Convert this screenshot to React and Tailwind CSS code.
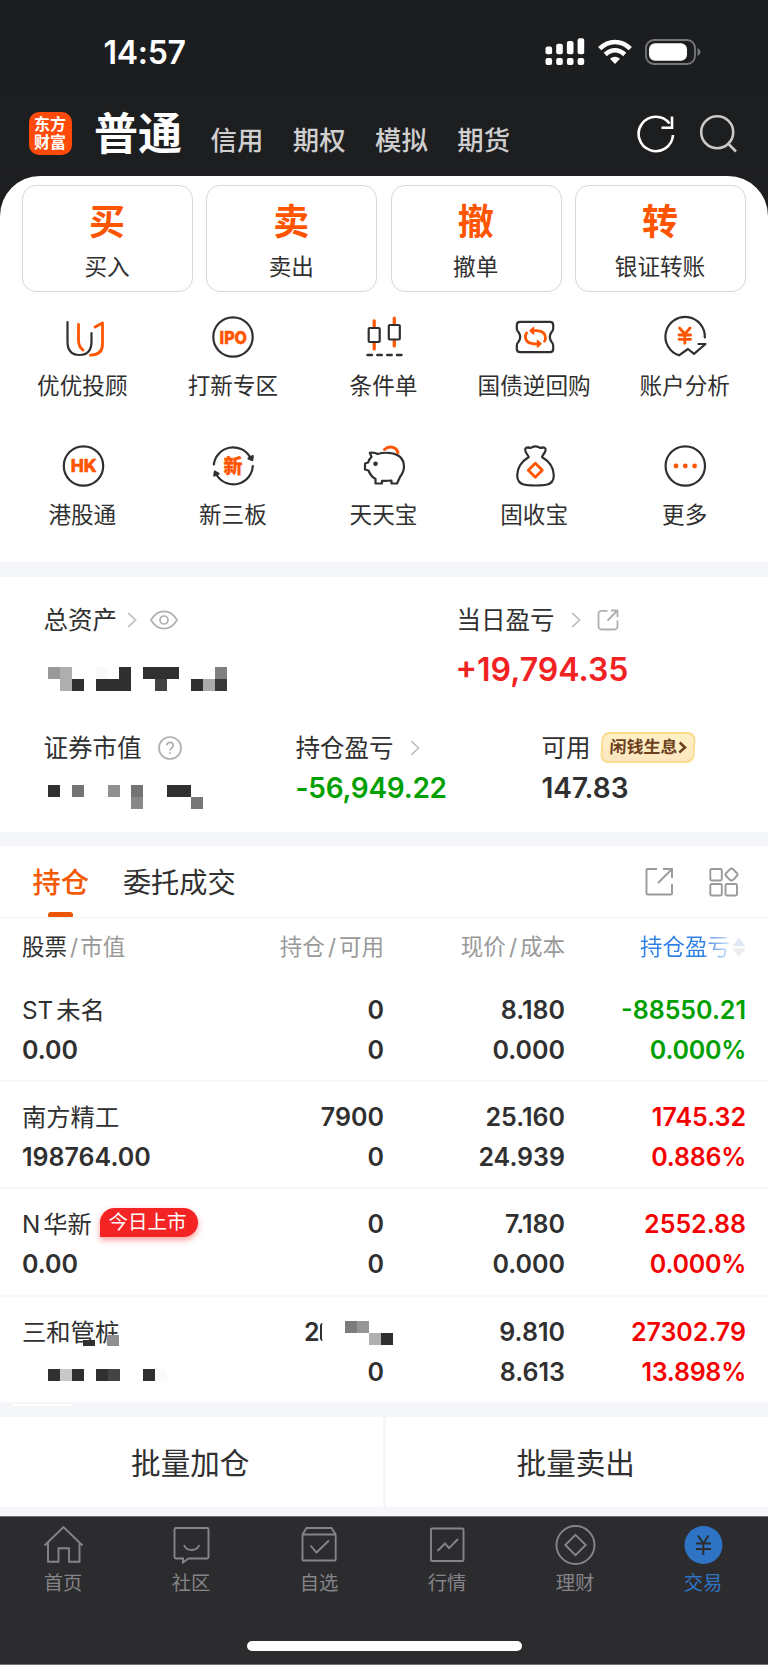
import React from "react";

const DARK = "#303030";
const ORANGE = "#ff5500";

function Chevron({ className = "" }) {
  return (
    <svg width="10" height="16" viewBox="0 0 10 16" fill="none" stroke="#bdbdbd" strokeWidth="1.6" className={className}>
      <path d="M1.2 1.2 8.6 8l-7.4 6.8" />
    </svg>
  );
}

function Mosaic({ cells, width, height, className = "" }) {
  return (
    <svg width={width} height={height} className={className} shapeRendering="crispEdges">
      {cells.map(([col, row, color]) => (
        <rect key={`${col}-${row}`} x={col * 11.9} y={row * 11.9} width="12" height="12" fill={color} />
      ))}
    </svg>
  );
}

function IconBox({ children }) {
  return (
    <svg width="42" height="42" viewBox="0 0 42 42" fill="none" stroke={DARK} strokeWidth="2.2" strokeLinecap="round" strokeLinejoin="round" className="ml-px block overflow-visible">
      {children}
    </svg>
  );
}

const labelInIcon = { fill: ORANGE, stroke: ORANGE, strokeWidth: 0.5, fontWeight: 800, textAnchor: "middle", fontFamily: 'Inter, "Noto Sans CJK SC", sans-serif' };

const icons = {
  advisor: (
    <IconBox>
      <path d="M5.500 6v19.500q0 13.500 12 13.500t12-13.500v-8.500" />
      <path d="M16.500 8.500v15q0 7.500 4.500 10.500M33 11l7.500-4v21q0 11-12 11.200" stroke={ORANGE} strokeWidth="2.800" />
    </IconBox>
  ),
  ipo: (
    <IconBox>
      <circle cx="21" cy="21" r="19.700" />
      <text x="21.300" y="27.500" fontSize="18" textLength="27.500" lengthAdjust="spacingAndGlyphs" {...labelInIcon}>IPO</text>
    </IconBox>
  ),
  candles: (
    <IconBox>
      <path d="M11.200 4.800v6.500M11.200 27v6M31.300 2.200v6.500M31.300 24v6" stroke={ORANGE} strokeWidth="3.200" />
      <rect x="5.700" y="12" width="11" height="14" rx="1" />
      <rect x="25.800" y="9" width="11" height="14.500" rx="1" />
      <path d="M4.500 39h4.500M14.300 39h4.500M24.200 39h4.500M34 39h4.500" strokeWidth="2.400" />
    </IconBox>
  ),
  bond: (
    <IconBox>
      <path d="M6 5.800H36q3.200 0 3.200 3.200v3.500q0 2-1.600 3.500-3.600 5 0 10 1.600 1.500 1.600 3.500V33q0 3.200-3.200 3.200H6q-3.200 0-3.200-3.200v-3.500q0-2 1.600-3.500 3.600-5 0-10-1.600-1.500-1.600-3.500V9q0-3.200 3.200-3.200z" />
      <path d="M18 14.700h4.500q9 .5 9 7.300 0 1.800-1 3.200M12.600 17q-1.200 1.800-1.200 4 0 6.300 9 6.800h4" stroke={ORANGE} strokeWidth="2.800" />
      <path d="M19.500 11.500 16 14.700l3.500 3.200zM23.500 24.600l3.500 3.200-3.500 3.200z" stroke={ORANGE} fill={ORANGE} strokeWidth="1.500" />
    </IconBox>
  ),
  analysis: (
    <IconBox>
      <path d="M40.800 21.500A19.700 19.700 0 1 0 15 39.300L24 33l6 4.900L41.500 28h-7" />
      <path d="M15.500 12l5.300 6 5.300-6M20.800 18v9.300M15 19h11.600M15 23.300h11.600" stroke={ORANGE} strokeWidth="2.800" />
    </IconBox>
  ),
  hk: (
    <IconBox>
      <circle cx="21.500" cy="21" r="19.700" />
      <text x="21.700" y="27.300" fontSize="18" textLength="26" lengthAdjust="spacingAndGlyphs" {...labelInIcon}>HK</text>
    </IconBox>
  ),
  board: (
    <IconBox>
      <path d="M1.800 19.500A19.500 19.500 0 0 1 38 12M40.800 21A19.500 19.500 0 0 1 5 30.500" />
      <path d="M36.500 13.500l3.700 1.500.6-4zM2.300 30.500l.6-3.800 3.600 2z" fill={DARK} />
      <text x="21" y="27.500" fontSize="19" {...labelInIcon} strokeWidth="0.3">新</text>
    </IconBox>
  ),
  pig: (
    <IconBox>
      <path d="M6.800 7.800Q11.500 7 14.500 9 19 7.600 25 7.800q15.800.8 16 14 0 5-4 10.200l-3 6.500h-5.500V35.500q-5 .6-9.500.4v2.600h-6.500V34Q7.500 31 5.500 25.500L2 24.500v-6l3.200-1Q6 14 8.500 11.800z" />
      <circle cx="12.500" cy="18.700" r="1.200" fill={DARK} />
      <path d="M21.500 4.500q3-2.800 6.500-2.500 5.500.5 7 5.500" stroke={ORANGE} strokeWidth="3" />
    </IconBox>
  ),
  bag: (
    <IconBox>
      <path d="M14.800 12Q13 9 11.700 7 10 2.500 14 2.400q2.700 1 4-.2 3.400-1.800 6.800 0 1.400 1.200 4 .2Q33 2.500 31 7q-1.500 2-3 5Q39.500 19 39.800 30q.3 9-8.800 10-9.700 1-19 0Q3 39 3.200 30 3.500 19 14.800 12z" />
      <path d="M21.300 18.300l7 7-7 7-7-7z" stroke={ORANGE} strokeWidth="2.800" />
    </IconBox>
  ),
  more: (
    <IconBox>
      <circle cx="21.300" cy="21" r="19.700" />
      <g fill={ORANGE} stroke="none">
        <circle cx="12" cy="21" r="2.400" />
        <circle cx="21.300" cy="21" r="2.400" />
        <circle cx="30.600" cy="21" r="2.400" />
      </g>
    </IconBox>
  ),
};

const actions = [
  ["买", "买入"],
  ["卖", "卖出"],
  ["撤", "撤单"],
  ["转", "银证转账"],
];

const services = [
  ["advisor", "优优投顾"],
  ["ipo", "打新专区"],
  ["candles", "条件单"],
  ["bond", "国债逆回购"],
  ["analysis", "账户分析"],
  ["hk", "港股通"],
  ["board", "新三板"],
  ["pig", "天天宝"],
  ["bag", "固收宝"],
  ["more", "更多"],
];

const D = "#303030";
const totalCells = [
  [0, 0, "#999999"], [1, 0, "#aeaeae"], [4, 0, "#f9f9f9"], [6, 0, D], [8, 0, D], [9, 0, D], [10, 0, D], [14, 0, "#808080"],
  [1, 1, "#aeaeae"], [2, 1, D], [4, 1, D], [5, 1, D], [6, 1, D], [9, 1, "#444444"], [12, 1, D], [13, 1, "#aaaaaa"], [14, 1, "#383838"],
];
const marketCells = [
  [0, 0, D], [2, 0, "#747474"], [5, 0, "#909090"], [7, 0, "#747474"], [10, 0, D], [11, 0, D],
  [7, 1, "#888888"], [12, 1, "#777777"],
];
const valueCells = [[0, 0, D], [1, 0, "#c8c8c8"], [2, 0, D], [4, 0, D], [5, 0, "#444444"], [8, 0, D], [9, 0, "#fafafa"]];
const amountCells = [[0, 0, "#7c7c7c"], [1, 0, "#969696"], [2, 1, "#b0b0b0"], [3, 1, D]];

const holdings = [
  { prefix: "ST", name: "未名", value: "0.00", qty: "0", avail: "0", price: "8.180", cost: "0.000", pl: "-88550.21", pct: "0.000%", color: "text-[#00a000]" },
  { name: "南方精工", value: "198764.00", qty: "7900", avail: "0", price: "25.160", cost: "24.939", pl: "1745.32", pct: "0.886%", color: "text-[#f50000]" },
  { prefix: "N", name: "华新", tag: "今日上市", value: "0.00", qty: "0", avail: "0", price: "7.180", cost: "0.000", pl: "2552.88", pct: "0.000%", color: "text-[#f50000]" },
  { name: "三和管桩", masked: true, avail: "0", price: "9.810", cost: "8.613", pl: "27302.79", pct: "13.898%", color: "text-[#f50000]" },
];

function StatusBar() {
  return (
    <div className="flex h-[104px] items-center justify-between pl-[103.500px] pr-[67px]">
      <div className="pt-[2px] text-[32px] font-semibold leading-none tracking-[-0.3px] text-white">14:57</div>
      <div className="flex items-center gap-[13px]">
        <svg width="40" height="28" viewBox="0 0 40 28" fill="#fff">
          {[8.5, 5.7, 3, 0.3].map((y, i) => (
            <g key={y}>
              <rect x={0.5 + i * 10.7} y={y} width="6.600" height={16.3 - y} rx="2" />
              <rect x={0.5 + i * 10.7} y="20" width="6.600" height="7" rx="2" />
            </g>
          ))}
        </svg>
        <svg width="34" height="26" viewBox="0 0 34 26" fill="none" stroke="#fff" strokeWidth="4.600">
          <path d="M1.700 9.700Q8.500 3 17 3t15.300 6.700M7.300 15.500Q11.700 11.300 17 11.300t9.700 4.200" />
          <path d="M17 25l-5-5.200q5-4.200 10 0z" fill="#fff" stroke="none" />
        </svg>
        <svg width="56" height="26" viewBox="0 0 56 26" fill="none">
          <rect x="1" y="1" width="49" height="24" rx="8" stroke="#77787a" strokeWidth="1.800" />
          <rect x="4" y="4.200" width="38" height="17.600" rx="6" fill="#fff" />
          <path d="M52.500 9q3 1.500 3 4t-3 4z" fill="#77787a" />
        </svg>
      </div>
    </div>
  );
}

function Header() {
  return (
    <div className="flex h-[72px] items-start pl-[28.500px]">
      <div className="mt-2 flex h-[43px] w-[43px] flex-col items-center justify-center rounded-[10px] bg-[#ff4a0a] text-[16px] font-bold leading-[17.500px] text-white">
        <span>东方</span>
        <span>财富</span>
      </div>
      <div className="ml-[22.500px] h-[60px] text-[44px] font-semibold leading-[60px] text-white">普通</div>
      <div className="ml-[28.500px] mt-[16px] flex gap-[29.500px] text-[26.400px] font-medium leading-[41px] text-[#cfcfcf]">
        <span>信用</span>
        <span>期权</span>
        <span>模拟</span>
        <span>期货</span>
      </div>
      <svg width="38" height="40" viewBox="0 0 38 40" fill="none" stroke="#fff" strokeWidth="2.600" className="ml-auto mt-[10px]">
        <path d="M36 21A17.200 17.200 0 1 1 32.500 9.500" />
        <path d="M35 2.500v11.300H24.500" />
      </svg>
      <svg width="40" height="40" viewBox="0 0 40 40" fill="none" stroke="#c8c8c8" strokeWidth="2.600" className="ml-[24px] mr-[29px] mt-[10px]">
        <circle cx="18.200" cy="18.200" r="16" />
        <path d="M29 29.500l8 8" />
      </svg>
    </div>
  );
}

function Assets() {
  return (
    <section className="h-[255px] bg-white pt-[27px] text-[24.500px] text-[#303030]">
      <div className="flex">
        <div className="ml-[43.500px] w-[413px] shrink-0">
          <div className="flex h-8 items-center leading-8">
            总资产
            <Chevron className="ml-[10px]" />
            <svg width="28" height="20" viewBox="0 0 28 20" fill="none" stroke="#b0b0b0" strokeWidth="1.700" className="ml-[13px]">
              <path d="M1 10Q6 1.300 14 1.300T27 10q-5 8.700-13 8.700T1 10z" />
              <circle cx="14" cy="10" r="4" />
            </svg>
          </div>
          <Mosaic cells={totalCells} width={182} height={24} className="ml-[4px] mt-[31px] block" />
        </div>
        <div>
          <div className="flex h-8 items-center leading-8">
            当日盈亏
            <Chevron className="ml-[16px]" />
            <svg width="22" height="22" viewBox="0 0 22 22" fill="none" stroke="#b0b0b0" strokeWidth="1.800" className="ml-[16px]">
              <path d="M10.500 1.800H5Q1.500 1.800 1.500 5v12q0 3.500 3.500 3.500h12q3.500 0 3.500-3.500v-5.500M14 1.500h6.500V8M20 2L10.500 11.500" />
            </svg>
          </div>
          <div className="-ml-px mt-[18px] h-8 text-[32px] font-semibold leading-8 text-[#f32222]">+19,794.35</div>
        </div>
      </div>
      <div className="mt-[41px] flex pl-[43.500px]">
        <div className="w-[252px]">
          <div className="flex h-8 items-center leading-8">
            证券市值
            <svg width="24" height="24" viewBox="0 0 24 24" fill="none" stroke="#b0b0b0" strokeWidth="1.700" className="ml-[16px]">
              <circle cx="12" cy="12" r="11" />
              <path d="M8.800 9.300Q9 6.300 12 6.300t3.200 3q0 1.600-1.800 2.800-1.400 1-1.400 2.700M12 16.200v1.900" />
            </svg>
          </div>
          <Mosaic cells={marketCells} width={156} height={24} className="ml-[4px] mt-[21px] block" />
        </div>
        <div className="w-[246px]">
          <div className="flex h-8 items-center leading-8">
            持仓盈亏
            <Chevron className="ml-[16px]" />
          </div>
          <div className="mt-2 text-[28px] font-semibold leading-8 tracking-[-0.250px] text-[#00a000]">-56,949.22</div>
        </div>
        <div>
          <div className="flex h-8 items-center leading-8">
            可用
            <span className="-mt-px ml-[10px] flex h-[31px] w-[94px] -skew-x-3 items-center justify-center rounded-[8px] border-2 border-[#fbdc8c] bg-gradient-to-b from-[#fff0c4] to-[#fde6bf] text-[17px] font-bold leading-none text-[#6b3f20]">
              闲钱生息
              <svg width="9" height="13" viewBox="0 0 9 13" fill="none" stroke="#6b3f20" strokeWidth="2.500">
                <path d="M1.500 1.500l5.500 5-5.500 5" />
              </svg>
            </span>
          </div>
          <div className="mt-2 text-[28px] font-semibold leading-8">147.83</div>
        </div>
      </div>
    </section>
  );
}

function HoldingsTabs() {
  return (
    <div className="flex h-[72px] items-start border-b border-[#f1f1f3] bg-white pl-[32.500px] pr-[29px]">
      <div className="flex flex-col items-center text-[28.200px] font-medium text-[#f45a05]">
        <span className="h-[66px] leading-[74px]">持仓</span>
        <span className="h-[5px] w-[25px] rounded-t-[3px] rounded-b-[1px] bg-[#ec5504]" />
      </div>
      <span className="ml-[34px] text-[28.200px] leading-[74px] text-[#303030]">委托成交</span>
      <svg width="29" height="30" viewBox="0 0 29 30" fill="none" stroke="#9a9a9a" strokeWidth="1.900" className="ml-auto mt-[21px]">
        <path d="M12 2H2.500Q1.500 2 1.500 3v23.500q0 1 1 1h23.500q1 0 1-1V17M18 2h9v9M26.500 2.500L13 16" />
      </svg>
      <svg width="30" height="30" viewBox="0 0 30 30" fill="none" stroke="#9a9a9a" strokeWidth="1.900" strokeLinejoin="round" className="ml-[35px] mt-[21px]">
        <rect x="1.300" y="2" width="11.500" height="11.500" rx="1.500" />
        <rect x="1.300" y="17" width="11.500" height="11.500" rx="1.500" />
        <rect x="16.500" y="17" width="11.500" height="11.500" rx="1.500" />
        <path d="M22.500 1.500q1 0 1.700.8l4 4.200q.8 1 0 2l-4 4.300q-1.700 1.600-3.400 0l-4-4.300q-.8-1 0-2l4-4.200q.7-.8 1.700-.8z" />
      </svg>
    </div>
  );
}

function HoldingRow({ row }) {
  return (
    <div className="flex h-[107.200px] border-b-2 border-[#f7f7f8] px-[22px] pt-[15px] text-[25px] font-semibold leading-[40px] text-[#303030]">
      <div className="w-[192px]">
        <div className="relative flex h-[40px] items-center text-[24.300px] font-normal">
          {row.prefix && <span className="mr-[3px]">{row.prefix}</span>}
          {row.name}
          {row.tag && (
            <span className="mb-[4px] ml-[8px] flex h-[29px] w-[98px] items-center justify-center rounded-full rounded-bl-[3px] bg-[#f52424] pr-[3px] text-[19.500px] leading-none text-white shadow-[0_3px_6px_rgba(245,36,36,0.45)]">
              {row.tag}
            </span>
          )}
          {row.masked && (
            <span className="absolute left-[61px] top-[23px] flex h-[11px] items-end gap-3">
              <span className="h-[6px] w-3 bg-[#303030]" />
              <span className="h-[11px] w-3 bg-[#909090]" />
            </span>
          )}
        </div>
        {row.masked ? <Mosaic cells={valueCells} width={120} height={12} className="ml-[26px] mt-[17px] block" /> : row.value}
      </div>
      <div className="w-[170px] text-right">
        {row.masked ? (
          <div className="flex h-[40px] items-center">
            <span className="ml-[90px] shrink-0">2</span>
            <span className="h-[18px] w-[3px] shrink-0 rounded-l-full border-l-2 border-[#303030]" />
            <Mosaic cells={amountCells} width={48} height={24} className="-mr-4 ml-[22px] mt-[2px] shrink-0" />
          </div>
        ) : (
          <div>{row.qty}</div>
        )}
        <div>{row.avail}</div>
      </div>
      <div className="w-[181px] text-right">
        <div>{row.price}</div>
        <div>{row.cost}</div>
      </div>
      <div className={`w-[181px] text-right ${row.color}`}>
        <div>{row.pl}</div>
        <div className="tracking-[-0.250px]">{row.pct}</div>
      </div>
    </div>
  );
}

const tabItems = [
  ["首页", <path key="i" d="M1.500 20.500L20.500 2l19 18.500M5 17.500v19.300h10.500V23.200h10.500v13.600h10.500V17.500" />],
  ["社区", (
    <g key="i">
      <path d="M5 3h31q1.500 0 1.500 1.500v27.500q0 1.500-1.500 1.500H17.500L12 37.500v-4H5q-1.500 0-1.500-1.500V4.500Q3.500 3 5 3z" />
      <path d="M13 20q2 5 7.700 5t7.600-5" />
    </g>
  )],
  ["自选", (
    <g key="i">
      <path d="M3.500 9.500L7.500 3h25l4.200 6.500M4.500 9.500h31.200q1 0 1 1v24q0 1-1 1H4.500q-1 0-1-1v-24q0-1 1-1zM11.500 20.500l6 7L30 15.500" />
    </g>
  )],
  ["行情", (
    <g key="i">
      <rect x="4" y="3.500" width="32.500" height="32.500" rx="1" />
      <path d="M10.500 26l7.500-7.500 4 4.700L31 14" />
    </g>
  )],
  ["理财", (
    <g key="i">
      <circle cx="20.500" cy="20" r="19" />
      <path d="M20.500 9.800L30.700 20 20.500 30.200 10.300 20z" />
    </g>
  )],
  ["交易", (
    <g key="i">
      <circle cx="20.500" cy="20" r="19" fill="#2f74c4" stroke="none" />
      <path d="M15 10.500l5.300 8 5.300-8M20.300 18.500V30M13 18.500h15M13 24h15" stroke="#2c2c2e" strokeWidth="2" />
    </g>
  ), true],
];

function TabBar() {
  return (
    <nav className="flex h-[149px] flex-col border-b border-t border-[#6f6f72] bg-[#2c2c2e]">
      <div className="-ml-px flex pt-[8px]">
        {tabItems.map(([label, icon, active]) => (
          <div key={label} className="flex w-32 flex-col items-center">
            <svg width="41" height="40" viewBox="0 0 41 40" fill="none" stroke="#858489" strokeWidth="1.900" className="ml-px">
              {icon}
            </svg>
            <span className={active ? "mt-[4px] text-[19.300px] leading-7 text-[#2f74c4]" : "mt-[4px] text-[19.300px] leading-7 text-[#858489]"}>{label}</span>
          </div>
        ))}
      </div>
      <div className="mb-[13px] mt-auto h-[10px] w-[275px] self-center rounded-full bg-white" />
    </nav>
  );
}

export default function App() {
  return (
    <div className="h-[1665px] w-[768px] overflow-hidden bg-[#f5f6f9] font-['Inter','Noto_Sans_CJK_SC',sans-serif]">
      <div className="bg-gradient-to-b from-[#1c1d1f] from-0% via-[#1d1e20] via-30% to-[#232323]">
        <StatusBar />
        <Header />
        <section className="h-[386px] rounded-t-[40px] bg-white pt-[9px] text-[22.600px] text-[#303030]">
          <div className="grid grid-cols-4 gap-[13.300px] px-[22px]">
            {actions.map(([glyph, label]) => (
              <div key={label} className="flex h-[107px] flex-col items-center rounded-[14px] border border-[#d8d8d8] pr-px pt-[15px]">
                <span className="text-[36px] font-bold leading-[43px] text-[#ff5500]">{glyph}</span>
                <span className="mt-[7px] leading-[32px]">{label}</span>
              </div>
            ))}
          </div>
          <div className="grid grid-cols-5 pl-[7px] pr-[8px]">
            {services.map(([icon, label]) => (
              <div key={label} className="flex h-[129px] flex-col items-center pt-6">
                {icons[icon]}
                <span className="mt-[14px] whitespace-nowrap leading-[28.500px]">{label}</span>
              </div>
            ))}
          </div>
        </section>
      </div>
      <div className="h-[15px]" />
      <Assets />
      <div className="h-[14px]" />
      <HoldingsTabs />
      <div className="bg-white">
        <div className="flex h-[57px] items-center px-[22px] text-[22.500px] text-[#999999]">
          <span className="w-[192px]">
            <span className="text-[#303030]">股票</span>
            <span className="pl-[3px] pr-[2px]">/</span>市值
          </span>
          <span className="w-[170px] text-right">持仓<span className="px-[3px]">/</span>可用</span>
          <span className="w-[181px] text-right">现价<span className="px-[3px]">/</span>成本</span>
          <span className="flex w-[181px] items-center justify-end">
            <span className="bg-gradient-to-r from-[#2f80e4] from-70% to-[#d6e5fa] bg-clip-text text-transparent">持仓盈亏</span>
            <svg width="14" height="20" viewBox="0 0 14 20" className="ml-[2px]">
              <path d="M7 0.500L13.500 9H0.500z" fill="#dfe8f5" />
              <path d="M7 19.500L13.500 11.500H0.500z" fill="#ebebed" />
            </svg>
          </span>
        </div>
        {holdings.map((row) => (
          <HoldingRow key={row.name} row={row} />
        ))}
      </div>
      <div className="h-[13px]">
        <div className="ml-[12px] h-[2px] w-[60px] rounded-b-full bg-white" />
      </div>
      <div className="flex h-[90px] gap-[3px] text-[29.600px] leading-[92px] text-[#303030]">
        <div className="flex-1 bg-white pr-[2px] text-center">批量加仓</div>
        <div className="flex-1 bg-white pr-[2px] text-center">批量卖出</div>
      </div>
      <div className="h-[9px]" />
      <TabBar />
    </div>
  );
}
